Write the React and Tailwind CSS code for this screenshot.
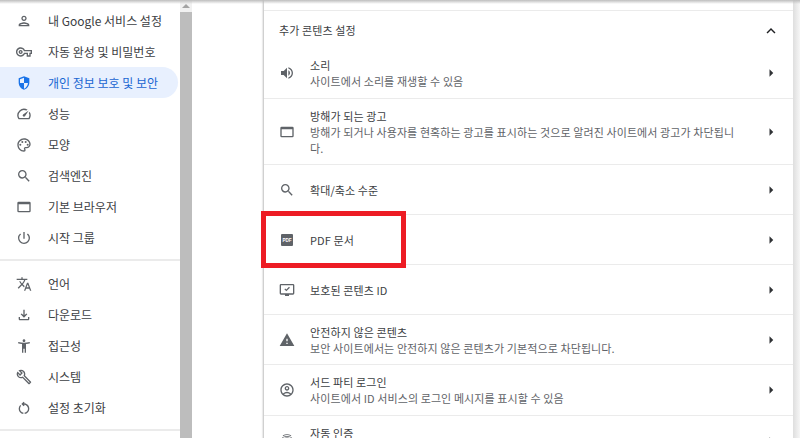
import React from "react";
import {
  MdOutlinePerson, MdOutlineVpnKey, MdOutlineSpeed, MdOutlinePalette, MdSearch,
  MdOutlinePowerSettingsNew, MdTranslate, MdOutlineFileDownload, MdAccessibilityNew,
  MdOutlineBuild, MdOutlineRestartAlt, MdVolumeUp, MdWarning, MdOutlineAccountCircle,
  MdArrowRight, MdExpandLess, MdOutlineFingerprint,
} from "react-icons/md";

const FONT = { fontFamily: '"Noto Sans CJK KR", "Liberation Sans", sans-serif' };

const Shield = (p) => (
  <svg viewBox="0 0 24 24" width={p.size} height={p.size} className={p.className} fill="currentColor">
    <path d="M12 2 4 5v6.1c0 5 3.4 9.7 8 10.9 4.6-1.2 8-5.9 8-10.9V5l-8-3Zm0 10H6V6.3l6-2.2V12Zm0 0h6c-.5 4-3 7.6-6 8.7V12Z" fillRule="evenodd" />
  </svg>
);
const WindowIcon = (p) => (
  <svg viewBox="0 0 24 24" width={p.size} height={p.size} className={p.className} fill="currentColor">
    <path d="M4 4h16a2 2 0 0 1 2 2v12a2 2 0 0 1-2 2H4a2 2 0 0 1-2-2V6a2 2 0 0 1 2-2Zm0 4v10h16V8H4Z" fillRule="evenodd" />
  </svg>
);
const Pdf = (p) => (
  <svg viewBox="0 0 16 16" width={p.size} height={p.size} className={p.className}>
    <rect x="2" y="2" width="12" height="12" rx="1" fill="currentColor" />
    <text x="8" y="10" textAnchor="middle" fontSize="4.6" fontWeight="700" fill="#fff" fontFamily="Liberation Sans, sans-serif">PDF</text>
  </svg>
);
const MonitorCheck = (p) => (
  <svg viewBox="0 0 24 24" width={p.size} height={p.size} className={p.className} fill="currentColor">
    <path d="M3 3h18a2 2 0 0 1 2 2v12a2 2 0 0 1-2 2h-6v2H9v-2H3a2 2 0 0 1-2-2V5a2 2 0 0 1 2-2Zm0 2v12h18V5H3Z" fillRule="evenodd" />
    <path d="m8 11 1.4-1.4 1.6 1.6 4-4L16.4 8.6 11 14l-3-3Z" />
  </svg>
);

const nav1 = [
  [MdOutlinePerson, "내 Google 서비스 설정"],
  [MdOutlineVpnKey, "자동 완성 및 비밀번호"],
  [Shield, "개인 정보 보호 및 보안", true],
  [MdOutlineSpeed, "성능"],
  [MdOutlinePalette, "모양"],
  [MdSearch, "검색엔진"],
  [WindowIcon, "기본 브라우저"],
  [MdOutlinePowerSettingsNew, "시작 그룹"],
];
const nav2 = [
  [MdTranslate, "언어"],
  [MdOutlineFileDownload, "다운로드"],
  [MdAccessibilityNew, "접근성"],
  [MdOutlineBuild, "시스템"],
  [MdOutlineRestartAlt, "설정 초기화"],
];

function NavItem({ icon: Icon, label, active }) {
  return (
    <div className={`flex h-[31px] w-[178px] items-center rounded-r-full pl-[16px] ${active ? "bg-[#e8f0fe] text-[#1a66d2]" : "text-[#3c4043]"}`}>
      <span className={`flex w-[32px] shrink-0 ${active ? "text-[#1a73e8]" : "text-[#5f6368]"}`}>
        <Icon size={16} />
      </span>
      <span className="text-[12px] leading-none whitespace-nowrap">{label}</span>
    </div>
  );
}

function Row({ icon: Icon, title, sub, h, first }) {
  return (
    <div className={`flex items-center pr-[13px] pl-[15px] ${first ? "" : "border-t border-[#ebebeb]"} ${h}`}>
      <span className="flex w-[31px] shrink-0 text-[#5f6368]"><Icon size={16} /></span>
      <div className="min-w-0 flex-1 pr-[26px] text-[11px] leading-[16px] tracking-[0.1px]">
        <div className="text-[#3c4043]">{title}</div>
        {sub && <div className="text-[#5f6368]">{sub}</div>}
      </div>
      <MdArrowRight size={18} className="shrink-0 text-[#303336]" />
    </div>
  );
}

export default function App() {
  return (
    <div className="relative flex h-[438px] w-[800px] overflow-hidden bg-white" style={FONT}>
      <aside className="flex w-[180px] shrink-0 flex-col pt-[5px]">
        {nav1.map(([i, l, a]) => <NavItem key={l} icon={i} label={l} active={a} />)}
        <div className="mt-[6px] mb-[7px] border-t-2 border-[#ebebeb]" />
        {nav2.map(([i, l]) => <NavItem key={l} icon={i} label={l} />)}
        <div className="mt-[6px] border-t-2 border-[#ebebeb]" />
      </aside>

      <div className="flex w-[12px] shrink-0 flex-col bg-[#bdbdbd]">
        <div className="flex h-[12px] items-center justify-center bg-[#f1f1f1]">
          <div className="h-0 w-0 border-x-[4px] border-b-[4px] border-x-transparent border-b-[#a3a3a3]" />
        </div>
      </div>

      <main className="flex flex-1 pl-[71px]">
        <section className="flex-1 border-l border-[#d0d0d0] pt-[10px] shadow-[-1px_0_1px_rgba(0,0,0,0.08)]">
          <div className="flex h-[38px] items-center border-t border-[#ebebeb] pt-[2px] pr-[13px] pl-[15px]">
            <span className="flex-1 text-[11px] tracking-[0.1px] text-[#3c4043]">추가 콘텐츠 설정</span>
            <MdExpandLess size={18} className="text-[#202124]" />
          </div>
          <Row first icon={MdVolumeUp} title="소리" sub="사이트에서 소리를 재생할 수 있음" h="h-[50px]" />
          <Row icon={WindowIcon} title="방해가 되는 광고" sub="방해가 되거나 사용자를 현혹하는 광고를 표시하는 것으로 알려진 사이트에서 광고가 차단됩니다." h="h-[66px]" />
          <Row icon={MdSearch} title="확대/축소 수준" h="h-[50px]" />
          <Row icon={Pdf} title="PDF 문서" h="h-[50px]" />
          <Row icon={MonitorCheck} title="보호된 콘텐츠 ID" h="h-[50px]" />
          <Row icon={MdWarning} title="안전하지 않은 콘텐츠" sub="보안 사이트에서는 안전하지 않은 콘텐츠가 기본적으로 차단됩니다." h="h-[50px]" />
          <Row icon={MdOutlineAccountCircle} title="서드 파티 로그인" sub="사이트에서 ID 서비스의 로그인 메시지를 표시할 수 있음" h="h-[51px]" />
          <Row icon={MdOutlineFingerprint} title="자동 인증" sub={"\u00a0"} h="h-[50px]" />
        </section>
        <div className="w-[7px] shrink-0 bg-gradient-to-r from-[#dedede] to-[#f6f6f6]" />
      </main>

      {/* screenshot annotation */}
      <div className="absolute top-[211px] left-[261px] h-[57px] w-[145px] border-[5px] border-[#ed1c24]" />
      {/* top shadow */}
      <div className="absolute inset-x-0 top-0 h-[4px] bg-gradient-to-b from-[#bdbdbd] to-transparent" />
    </div>
  );
}
